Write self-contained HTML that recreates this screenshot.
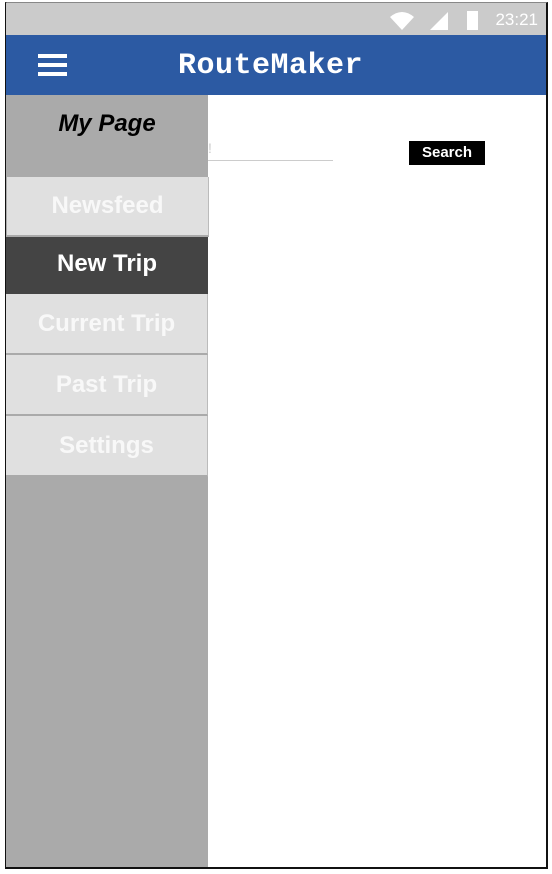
<!DOCTYPE html>
<html><head><style>
*{margin:0;padding:0;box-sizing:border-box}
body{width:552px;height:874px;background:#fff;position:relative;overflow:hidden;font-family:"Liberation Sans",sans-serif}
.frame{position:absolute;left:5px;top:2px;width:543px;height:867px;border:2px solid #111;border-top:1px solid #888;background:#fff}
.status{position:absolute;left:6px;top:3px;width:540px;height:32px;background:#cbcbcb}
.time{position:absolute;right:8px;top:7px;color:#fff;font-size:17px}
.bar{position:absolute;left:6px;top:35px;width:540px;height:60px;background:#2c5aa3}
.ham{position:absolute;left:32px;width:29px;height:4px;background:#fff}
.title{position:absolute;left:172px;top:14px;color:#fff;font-family:"Liberation Mono",monospace;font-weight:bold;font-size:30px;letter-spacing:0.5px}
.drawer{position:absolute;left:6px;top:95px;width:202px;height:772px;background:#aaa}
.mp{position:absolute;left:0;top:15px;width:202px;text-align:center;font-size:24px;font-weight:bold;font-style:italic;color:#000}
.it{position:absolute;left:6px;width:202px;background:#e0e0e0;color:#f8f8f8;font-weight:bold;font-size:24px;text-align:center;border-bottom:2px solid #aaa;border-right:1px solid #bbb}
.input{position:absolute;left:208px;top:160px;width:125px;height:1px;background:#ccc}
.btn{position:absolute;left:409px;top:141px;width:76px;height:24px;background:#000;color:#fff;font-weight:bold;font-size:15px;text-align:center;line-height:24px}
</style></head><body>
<div class="frame"></div>
<div class="status">
<svg style="position:absolute;left:383px;top:8px" width="26" height="20"><path d="M1 6 Q13 -4 25 6 L13 19Z" fill="#fff"/></svg>
<svg style="position:absolute;left:423px;top:8px" width="20" height="20"><path d="M19 1 V19 H1Z" fill="#fff"/></svg>
<div style="position:absolute;left:461px;top:8px;width:11px;height:19px;background:#fff"></div>
<div class="time">23:21</div>
</div>
<div class="bar">
<div class="ham" style="top:19px"></div><div class="ham" style="top:28px"></div><div class="ham" style="top:37px"></div>
<div class="title">RouteMaker</div>
</div>
<div class="input"></div>
<div style="position:absolute;left:208px;top:140px;color:#ccc;font-size:14px">!</div>
<div class="btn">Search</div>
<div class="drawer"><div class="mp">My Page</div></div>
<div class="it" style="top:177px;height:60px;line-height:58px;left:7px">Newsfeed</div>
<div class="it" style="top:237px;height:57px;line-height:54px;background:#444;color:#fff;border:none">New Trip</div>
<div class="it" style="top:294px;height:61px;line-height:60px">Current Trip</div>
<div class="it" style="top:355px;height:61px;line-height:60px">Past Trip</div>
<div class="it" style="top:416px;height:61px;line-height:60px">Settings</div>
</body></html>
